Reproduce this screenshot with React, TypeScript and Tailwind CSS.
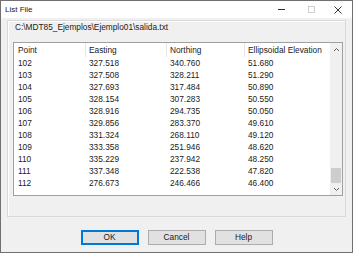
import React from "react";

const rows = [
  ["102", "327.518", "340.760", "51.680"],
  ["103", "327.508", "328.211", "51.290"],
  ["104", "327.693", "317.484", "50.890"],
  ["105", "328.154", "307.283", "50.550"],
  ["106", "328.916", "294.735", "50.050"],
  ["107", "329.856", "283.370", "49.610"],
  ["108", "331.324", "268.110", "49.120"],
  ["109", "333.358", "251.946", "48.620"],
  ["110", "335.229", "237.942", "48.250"],
  ["111", "337.348", "222.538", "47.820"],
  ["112", "276.673", "246.466", "46.400"],
];

const font = { fontFamily: '"Liberation Sans", Arial, sans-serif' };

function Chevron({ up }: { up?: boolean }) {
  return (
    <svg width="7" height="5" viewBox="0 0 7 5">
      <path
        d={up ? "M1 4 L3.5 1.5 L6 4" : "M1 1 L3.5 3.5 L6 1"}
        fill="none"
        stroke="#606060"
        strokeWidth="1"
      />
    </svg>
  );
}

export default function App() {
  return (
    <div
      className="w-[353px] h-[253px] bg-[#f0f0f0] border border-[#707070] flex flex-col text-[8.3px] text-[#1a1a1a] leading-none overflow-hidden"
      style={font}
    >
      {/* title bar */}
      <div className="h-[17px] bg-white flex items-center pl-[4px] shrink-0">
        <span className="text-[8px] text-[#222]">List File</span>
        <div className="ml-auto flex items-center h-full">
          <div className="w-[30px] flex justify-center">
            <div className="w-[7px] h-px bg-[#333]" />
          </div>
          <div className="w-[30px] flex justify-center">
            <div className="w-[7px] h-[7px] border border-[#cfcfcf]" />
          </div>
          <div className="w-[26px] flex justify-center pr-[2px]">
            <svg width="8" height="8" viewBox="0 0 8 8">
              <path d="M0.5 0.5 L7.5 7.5 M7.5 0.5 L0.5 7.5" stroke="#333" strokeWidth="1" />
            </svg>
          </div>
        </div>
      </div>

      {/* body */}
      <div className="pl-[6px] pt-[2px] flex flex-col">
        <div className="w-[339px] h-[197px] border border-[#d9d9d9] shadow-[inset_1px_1px_0_#ffffff] pl-[5px] flex flex-col">
          <div className="h-[12px] flex items-center pl-[2px]">
            C:\MDT85_Ejemplos\Ejemplo01\salida.txt
          </div>
          <div className="mt-[9px] w-[330px] h-[154px] border border-[#a0a0a0] bg-white flex">
            <div className="flex-1 flex flex-col">
              <div className="h-[14px] flex items-center shrink-0">
                <div className="w-[72px] h-full flex items-center pl-[4px] border-r border-[#e5e5e5]">Point</div>
                <div className="w-[81px] h-full flex items-center pl-[3px] border-r border-[#e5e5e5]">Easting</div>
                <div className="w-[78px] h-full flex items-center pl-[3px] border-r border-[#e5e5e5]">Northing</div>
                <div className="flex-1 h-full flex items-center pl-[3px]">Ellipsoidal Elevation</div>
              </div>
              {rows.map((r) => (
                <div key={r[0]} className="h-[12px] flex items-center">
                  <div className="w-[72px] pl-[4px]">{r[0]}</div>
                  <div className="w-[81px] pl-[3px]">{r[1]}</div>
                  <div className="w-[78px] pl-[3px]">{r[2]}</div>
                  <div className="flex-1 pl-[3px]">{r[3]}</div>
                </div>
              ))}
            </div>
            {/* scrollbar */}
            <div className="w-[12px] bg-[#f0f0f0] flex flex-col">
              <div className="h-[13px] flex items-center justify-center">
                <Chevron up />
              </div>
              <div className="flex-1 flex flex-col justify-end px-[1px] pb-[1px]">
                <div className="h-[15px] bg-[#cdcdcd]" />
              </div>
              <div className="h-[11px] flex items-center justify-center">
                <Chevron />
              </div>
            </div>
          </div>
        </div>

        {/* buttons */}
        <div className="mt-[13px] w-[339px] flex justify-center gap-[9px]">
          <button className="w-[58px] h-[15px] bg-[#e1e1e1] border border-[#0078d7] shadow-[inset_0_0_0_1px_#0078d7] text-[8.3px] text-[#1a1a1a] flex items-center justify-center" style={font}>
            OK
          </button>
          <button className="w-[58px] h-[15px] bg-[#e1e1e1] border border-[#adadad] text-[8.3px] text-[#1a1a1a] flex items-center justify-center" style={font}>
            Cancel
          </button>
          <button className="w-[58px] h-[15px] bg-[#e1e1e1] border border-[#adadad] text-[8.3px] text-[#1a1a1a] flex items-center justify-center" style={font}>
            Help
          </button>
        </div>
      </div>
    </div>
  );
}
